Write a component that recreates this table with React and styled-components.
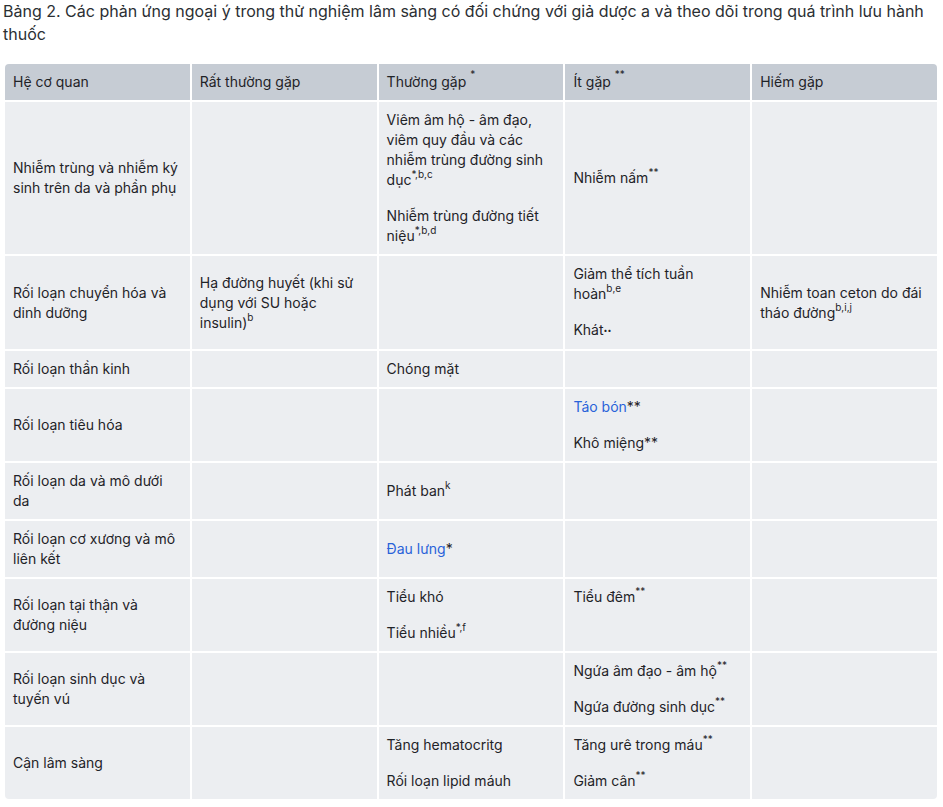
import React from "react";
import styled, { createGlobalStyle } from "styled-components";

const Global = createGlobalStyle`
  html, body { margin: 0; padding: 0; background: #ffffff; }
  body {
    font-family: Inter, "Noto Sans", "Liberation Sans", sans-serif;
    color: #1f2328;
  }
`;

const Page = styled.div`
  padding: 0 4px 0 3px;
`;

const Caption = styled.p`
  margin: 0;
  font-size: 16px;
  line-height: 23px;
  color: #2b2f33;
`;

const Table = styled.table`
  margin-top: 16px;
  width: 936px;
  table-layout: fixed;
  border-collapse: separate;
  border-spacing: 2px;
  font-size: 14px;
  line-height: 20px;
`;

const HeadCell = styled.th`
  background: #c6ccd4;
  text-align: left;
  font-weight: 400;
  padding: 8px;
  color: #1f2328;
  &:first-child { border-top-left-radius: 4px; }
  &:last-child { border-top-right-radius: 4px; }
`;

const Row = styled.tr`
  &:last-child td:first-child { border-bottom-left-radius: 4px; }
  &:last-child td:last-child { border-bottom-right-radius: 4px; }
`;

const Cell = styled.td`
  background: #eceef1;
  padding: 8px;
  vertical-align: middle;
  color: #1f2328;
`;

const TopCell = styled(Cell)`
  vertical-align: top;
`;

const Para = styled.p`
  margin: 0;
  & + & { margin-top: 16px; }
`;

const Sup = styled.sup`
  font-size: 10px;
  line-height: 0;
  vertical-align: ${(p) => (p.$high ? "9px" : "7px")};
`;

const Link = styled.span`
  color: #2962d9;
`;

const Dots = styled.span`
  font-size: 7px;
  vertical-align: 2px;
`;

const rows = [
  {
    organ: "Nhiễm trùng và nhiễm ký sinh trên da và phần phụ",
    c2: [
      <>Viêm âm hộ - âm đạo, viêm quy đầu và các nhiễm trùng đường sinh dục<Sup>*,b,c</Sup></>,
      <>Nhiễm trùng đường tiết niệu<Sup>*,b,d</Sup></>,
    ],
    c3: [<>Nhiễm nấm<Sup>**</Sup></>],
  },
  {
    organ: "Rối loạn chuyển hóa và dinh dưỡng",
    c1: [<>Hạ đường huyết (khi sử dụng với SU hoặc insulin)<Sup>b</Sup></>],
    c3: [<>Giảm thể tích tuần hoàn<Sup>b,e</Sup></>, <>Khát<Dots>••</Dots></>],
    c4: [<>Nhiễm toan ceton do đái tháo đường<Sup>b,i,j</Sup></>],
  },
  {
    organ: "Rối loạn thần kinh",
    c2: ["Chóng mặt"],
  },
  {
    organ: "Rối loạn tiêu hóa",
    c3: [<><Link>Táo bón</Link>**</>, <>Khô miệng**</>],
  },
  {
    organ: "Rối loạn da và mô dưới da",
    c2: [<>Phát ban<Sup>k</Sup></>],
  },
  {
    organ: "Rối loạn cơ xương và mô liên kết",
    c2: [<><Link>Đau lưng</Link>*</>],
  },
  {
    organ: "Rối loạn tại thận và đường niệu",
    c2: ["Tiểu khó", <>Tiểu nhiều<Sup>*,f</Sup></>],
    c3: [<>Tiểu đêm<Sup>**</Sup></>],
    top3: true,
  },
  {
    organ: "Rối loạn sinh dục và tuyến vú",
    c3: [<>Ngứa âm đạo - âm hộ<Sup>**</Sup></>, <>Ngứa đường sinh dục<Sup>**</Sup></>],
  },
  {
    organ: "Cận lâm sàng",
    c2: ["Tăng hematocritg", "Rối loạn lipid máuh"],
    c3: [<>Tăng urê trong máu<Sup>**</Sup></>, <>Giảm cân<Sup>**</Sup></>],
  },
];

function Content({ items }) {
  if (!items) return null;
  return items.map((it, i) => <Para key={i}>{it}</Para>);
}

export default function App() {
  return (
    <Page>
      <Global />
      <Caption>
        Bảng 2. Các phản ứng ngoại ý trong thử nghiệm lâm sàng có đối chứng với giả dược a và theo dõi trong quá trình lưu hành thuốc
      </Caption>
      <Table>
        <thead>
          <tr>
            <HeadCell>Hệ cơ quan</HeadCell>
            <HeadCell>Rất thường gặp</HeadCell>
            <HeadCell>Thường gặp <Sup $high>*</Sup></HeadCell>
            <HeadCell>Ít gặp <Sup $high>**</Sup></HeadCell>
            <HeadCell>Hiếm gặp</HeadCell>
          </tr>
        </thead>
        <tbody>
          {rows.map((r, i) => {
            const C3 = r.top3 ? TopCell : Cell;
            return (
              <Row key={i}>
                <Cell>{r.organ}</Cell>
                <Cell><Content items={r.c1} /></Cell>
                <Cell><Content items={r.c2} /></Cell>
                <C3><Content items={r.c3} /></C3>
                <Cell><Content items={r.c4} /></Cell>
              </Row>
            );
          })}
        </tbody>
      </Table>
    </Page>
  );
}
